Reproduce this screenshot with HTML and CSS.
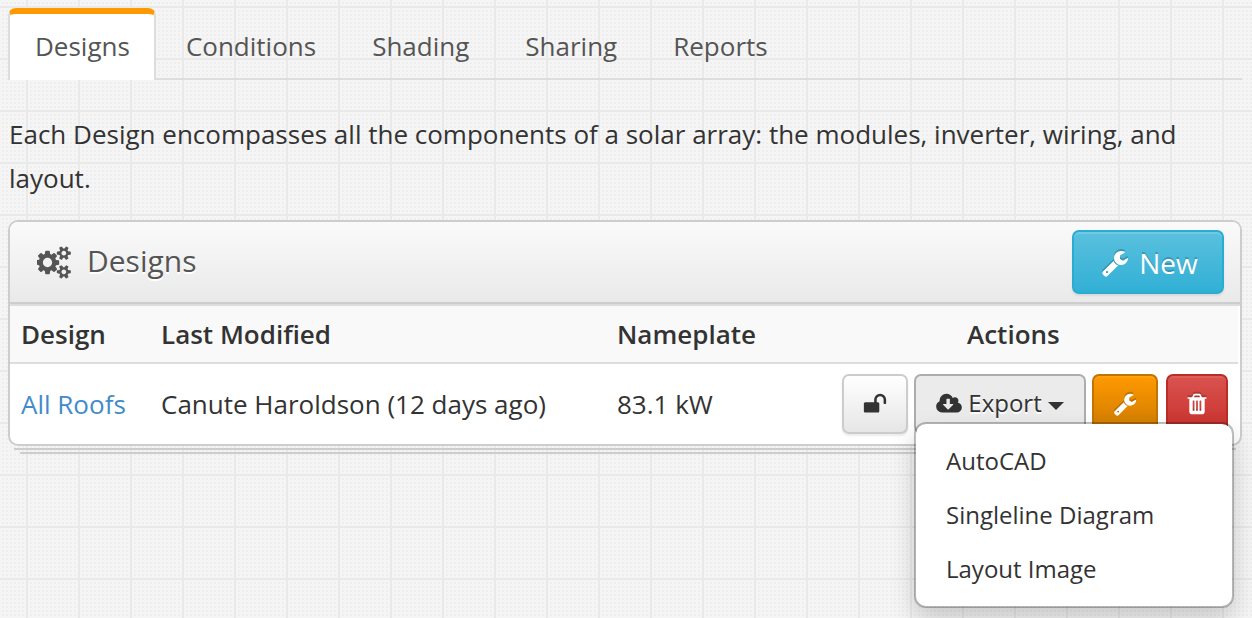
FILE: index.html
```html
<!DOCTYPE html>
<html lang="en">
<head>
<meta charset="utf-8">
<title>Designs</title>
<link rel="stylesheet" href="styles.css">
</head>
<body>
<svg class="defs" width="0" height="0">
  <symbol id="wrench" viewBox="0 0 1792 1792"><path d="M448 1472q0-26-19-45t-45-19-45 19-19 45 19 45 45 19 45-19 19-45zm644-420l-682 682q-37 37-90 37-52 0-91-37l-106-108q-38-36-38-90 0-53 38-91l681-681q39 98 114.500 173.500t173.500 114.500zm634-435q0 39-23 106-47 134-164.500 217.500t-258.500 83.500q-185 0-316.500-131.500t-131.500-316.500 131.500-316.500 316.500-131.500q58 0 121.500 16.500t107.500 46.500q16 11 16 28t-16 28l-293 169v224l193 107q5-3 79-48.500t135.500-81 70.500-35.500q15 0 23.500 10t8.500 25z"/></symbol>
  <symbol id="cloud" viewBox="0 0 1920 1792"><path d="M1280 928q0-14-9-23t-23-9h-224v-352q0-13-9.500-22.500t-22.500-9.500h-192q-13 0-22.500 9.500t-9.500 22.500v352h-224q-13 0-22.500 9.500t-9.500 22.500q0 14 9 23l352 352q9 9 23 9t23-9l351-351q10-12 10-24zm640 224q0 159-112.500 271.500t-271.500 112.500h-1088q-185 0-316.500-131.500t-131.500-316.500q0-130 70-240t188-165q-2-30-2-43 0-212 150-362t362-150q156 0 285.500 87t188.500 231q71-62 166-62 106 0 181 75t75 181q0 76-41 138 130 31 213.500 135.500t83.500 238.500z"/></symbol>
  <symbol id="trash" viewBox="0 0 1792 1792"><path d="M704 1376v-704q0-14-9-23t-23-9h-64q-14 0-23 9t-9 23v704q0 14 9 23t23 9h64q14 0 23-9t9-23zm256 0v-704q0-14-9-23t-23-9h-64q-14 0-23 9t-9 23v704q0 14 9 23t23 9h64q14 0 23-9t9-23zm256 0v-704q0-14-9-23t-23-9h-64q-14 0-23 9t-9 23v704q0 14 9 23t23 9h64q14 0 23-9t9-23zm-544-992h448l-48-117q-7-9-17-11h-317q-10 2-17 11zm928 32v64q0 14-9 23t-23 9h-96v948q0 83-47 143.500t-113 60.500h-832q-66 0-113-58.500t-47-141.500v-952h-96q-14 0-23-9t-9-23v-64q0-14 9-23t23-9h309l70-167q15-37 54-63t79-26h320q40 0 79 26t54 63l70 167h309q14 0 23 9t9 23z"/></symbol>
  <symbol id="unlock" viewBox="0 0 1792 1792"><path d="M1728 576v256q0 26-19 45t-45 19h-64q-26 0-45-19t-19-45v-256q0-106-75-181t-181-75-181 75-75 181v192h96q40 0 68 28t28 68v576q0 40-28 68t-68 28h-960q-40 0-68-28t-28-68v-576q0-40 28-68t68-28h672v-192q0-185 131.500-316.500t316.500-131.500 316.500 131.500 131.500 316.500z"/></symbol>
  <symbol id="cogs" viewBox="0 0 1920 1792"><path d="M832 896q0-106-75-181t-181-75-181 75-75 181 75 181 181 75 181-75 75-181zm768 512q0-52-38-90t-90-38-90 38-38 90q0 53 37.500 90.500t90.500 37.500 90.500-37.500 37.500-90.500zm0-1024q0-52-38-90t-90-38-90 38-38 90q0 53 37.500 90.500t90.500 37.500 90.500-37.500 37.500-90.500zm-384 421v185q0 10-7 19.500t-16 10.500l-155 24q-11 35-32 76 34 48 90 115 7 10 7 20 0 12-7 19-23 30-82.500 89.500t-78.500 59.500q-11 0-21-7l-115-90q-37 19-77 31-11 108-23 155-7 24-30 24h-186q-11 0-20-7.500t-10-17.500l-23-153q-34-10-75-31l-118 89q-7 7-20 7-11 0-21-8-144-133-144-160 0-9 7-19 10-14 41-53t47-61q-23-44-35-82l-152-24q-10-1-17-9.500t-7-19.500v-185q0-10 7-19.500t16-10.500l155-24q11-35 32-76-34-48-90-115-7-11-7-20 0-12 7-20 22-30 82-89t79-59q11 0 21 7l115 90q34-18 77-32 11-108 23-154 7-24 30-24h186q11 0 20 7.500t10 17.500l23 153q34 10 75 31l118-89q8-7 20-7 11 0 21 8 144 133 144 160 0 9-7 19-12 16-42 54t-45 60q23 48 34 82l152 23q10 2 17 10.500t7 19.500zm640 533v140q0 16-149 31-12 27-30 52 51 113 51 138 0 4-4 7-122 71-124 71-8 0-46-47t-52-68q-20 2-30 2t-30-2q-14 21-52 68t-46 47q-2 0-124-71-4-3-4-7 0-25 51-138-18-25-30-52-149-15-149-31v-140q0-16 149-31 13-29 30-52-51-113-51-138 0-4 4-7 4-2 35-20t59-34 30-16q8 0 46 46.500t52 67.500q20-2 30-2t30 2q51-71 92-112l6-2q4 0 124 70 4 3 4 7 0 25-51 138 17 23 30 52 149 15 149 31zm0-1024v140q0 16-149 31-12 27-30 52 51 113 51 138 0 4-4 7-122 71-124 71-8 0-46-47t-52-68q-20 2-30 2t-30-2q-14 21-52 68t-46 47q-2 0-124-71-4-3-4-7 0-25 51-138-18-25-30-52-149-15-149-31v-140q0-16 149-31 13-29 30-52-51-113-51-138 0-4 4-7 4-2 35-20t59-34 30-16q8 0 46 46.500t52 67.500q20-2 30-2t30 2q51-71 92-112l6-2q4 0 124 70 4 3 4 7 0 25-51 138 17 23 30 52 149 15 149 31z"/></symbol>
</svg>
<main class="page">
  <nav class="tabs">
    <a class="tab active">Designs</a>
    <a class="tab">Conditions</a>
    <a class="tab">Shading</a>
    <a class="tab">Sharing</a>
    <a class="tab">Reports</a>
  </nav>
  <p class="intro">Each Design encompasses all the components of a solar array: the modules, inverter, wiring, and layout.</p>
  <section class="widget">
    <header class="widget-head">
      <svg class="icon cogs"><use href="#cogs"/></svg>
      <h2 class="title">Designs</h2>
      <button class="btn new"><svg class="icon wrench-lg"><use href="#wrench"/></svg><span>New</span></button>
    </header>
    <div class="table">
      <div class="row head"><span>Design</span><span>Last Modified</span><span>Nameplate</span><span class="actions-label">Actions</span></div>
      <div class="row body">
        <a class="link">All Roofs</a><span>Canute Haroldson (12 days ago)</span><span>83.1 kW</span>
        <div class="actions">
          <button class="btn plain"><svg class="icon sm"><use href="#unlock"/></svg></button>
          <div class="dropdown">
            <button class="btn export"><svg class="icon cloud"><use href="#cloud"/></svg><span class="export-label">Export</span><i class="caret"></i></button>
            <div class="menu"><a>AutoCAD</a><a>Singleline Diagram</a><a>Layout Image</a></div>
          </div>
          <button class="btn edit"><svg class="icon sm"><use href="#wrench"/></svg></button>
          <button class="btn remove"><svg class="icon sm"><use href="#trash"/></svg></button>
        </div>
      </div>
    </div>
  </section>
  <div class="sheet first"></div>
  <div class="sheet second"></div>
</main>
</body>
</html>
```
FILE: styles.css
```css
* { box-sizing: border-box; }
html, body { height: 100%; }
body {
  margin: 0;
  overflow: hidden;
  font: 26px/44px "Open Sans", sans-serif;
  color: #333;
  background-color: #f5f5f5;
  background-image:
    linear-gradient(90deg, #e9e9e9 2px, #f5f5f5 2px, #f5f5f5 4px, transparent 4px),
    linear-gradient(#e9e9e9 2px, transparent 2px),
    conic-gradient(from 90deg at 2px 2px, transparent 270deg, #eee 0);
  background-size: 52px 52px, 52px 52px, 4px 4px;
  background-position: 26px 6px, 26px 6px, 0 2px;
  background-image:
    linear-gradient(90deg, #e9e9e9 2px, transparent 2px),
    linear-gradient(#e9e9e9 2px, transparent 2px),
    conic-gradient(from 90deg at 2px 2px, transparent 270deg, #eee 0);
}
.defs { position: absolute; }
.page { padding: 8px 10px 0 8px; }
.icon { fill: currentColor; flex: none; overflow: visible; }
.tabs { display: flex; height: 72px; border-bottom: 2px solid #ddd; }
.tab {
  height: 72px;
  padding: 14px 25px 0;
  border: 2px solid transparent;
  border-bottom: 0;
  margin-right: 2px;
  color: #555;
}
.tab.active {
  padding: 10px 24px 0 25px;
  margin-right: 3px;
  background: #fff;
  border-color: #ddd;
  border-top: 6px solid #ff9900;
  border-radius: 8px 8px 0 0;
}
.intro { margin: 32px 0 20px 1px; }
.widget { background: #fff; border: 2px solid #cdcdcd; border-radius: 10px; height: 226px; }
.widget-head {
  display: flex;
  align-items: center;
  height: 84px;
  padding: 0 16px 0 27px;
  border-bottom: 2px solid #ddd;
  box-shadow: inset 0 -2px #cdcdcd;
  background: linear-gradient(#fafafa, #e9e9e9);
  border-radius: 8px 8px 0 0;
  color: #555;
  text-shadow: 0 2px 0 #fff;
}
.cogs { width: 35px; height: 33px; margin-bottom: 2px; }
.title { margin: 0 auto 4px 15px; font-size: 30px; font-weight: 400; }
.btn {
  display: flex;
  align-items: center;
  justify-content: center;
  height: 60px;
  padding: 0;
  border: 2px solid #ccc;
  border-radius: 7px;
  font: 24px "Open Sans", sans-serif;
  color: #fff;
}
.btn.new {
  width: 152px;
  height: 64px;
  gap: 10px;
  padding: 2px 0 0 3px;
  margin-bottom: 2px;
  font-size: 28px;
  border-color: #2aabd2;
  background: linear-gradient(#5bc0de, #31b0d5);
  box-shadow: inset 0 2px 0 rgba(255,255,255,.15), 0 2px 2px rgba(0,0,0,.08);
  text-shadow: 0 -2px 0 rgba(0,0,0,.2);
}
.wrench-lg { width: 28px; height: 28px; }
.sm { width: 24px; height: 24px; }
.row { display: grid; grid-template-columns: 140px 456px 225px 1fr; padding-left: 11px; align-items: center; }
.row.head { height: 58px; margin-right: 2px; background: #f9f9f9; border-bottom: 2px solid #ddd; font-weight: 600; }
.actions-label { margin-left: 125px; }
.row.body { height: 80px; }
.link { color: #428bca; }
.actions { display: flex; padding-right: 12px; }
.plain {
  width: 66px;
  margin-right: 6px;
  color: #333;
  background: linear-gradient(#fff, #e6e6e6);
  box-shadow: 0 2px 2px rgba(0,0,0,.08);
}
.dropdown { position: relative; margin-right: 6px; }
.export { width: 172px; gap: 6px; color: #333; background: #ebebeb; border-color: #adadad; text-shadow: 0 2px 0 #fff; }
.export-label { margin-bottom: 4px; }
.cloud { width: 26px; height: 24px; margin-bottom: 1px; }
.caret { border: 8px solid transparent; border-top-color: #333; border-bottom: 0; margin-top: 4px; }
.edit { width: 66px; margin-right: 8px; background: linear-gradient(#ff9900, #cc7a00); border-color: #c27400; }
.remove { width: 62px; background: linear-gradient(#d9534f, #c9302c); border-color: #b92c28; }
.edit, .remove { box-shadow: inset 0 2px 0 rgba(255,255,255,.08); }
.edit .icon, .remove .icon, .new .icon { filter: drop-shadow(0 -2px 0 rgba(0,0,0,.2)); }
.menu {
  position: absolute;
  z-index: 2;
  top: 48px;
  left: 0;
  width: 320px;
  height: 186px;
  padding: 10px 0;
  border: 2px solid rgba(0,0,0,.25);
  border-radius: 12px;
  background: #fff;
  background-clip: padding-box;
  box-shadow: 0 12px 24px rgba(0,0,0,.175);
}
.menu a { display: block; height: 54px; padding-left: 30px; font-size: 24px; line-height: 54px; }
.sheet { height: 2px; margin-top: 2px; background: #cdcdcd; }
.first { margin-left: 6px; margin-right: 6px; }
.second { margin-left: 12px; margin-right: 12px; }
```
